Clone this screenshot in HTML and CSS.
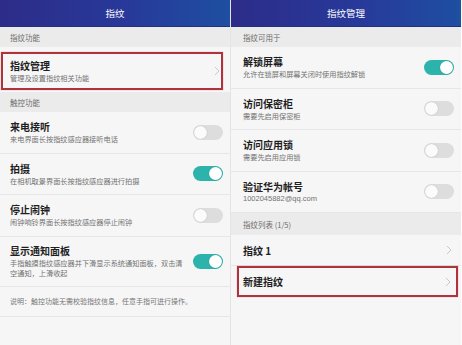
FILE: index.html
```html
<!DOCTYPE html>
<html lang="zh-CN">
<head>
  <meta charset="UTF-8" />
  <title>指纹</title>
  <link rel="stylesheet" href="styles.css">
</head>
<body>
  <div class="screens">
    <!-- 左侧：指纹 -->
    <section class="screen">
      <header class="topbar">指纹</header>
      <div class="group-title">指纹功能</div>
      <div class="row row-mark">
        <div class="mark">
          <div class="text">
            <div class="title">指纹管理</div>
            <div class="desc">管理及设置指纹相关功能</div>
          </div>
          <svg class="chevron" viewBox="0 0 6 10"><polyline points="1,1 5,5 1,9" /></svg>
        </div>
      </div>
      <div class="group-title">触控功能</div>
      <div class="row">
        <div class="text">
          <div class="title">来电接听</div>
          <div class="desc">来电界面长按指纹感应器接听电话</div>
        </div>
        <span class="switch"></span>
      </div>
      <div class="row">
        <div class="text">
          <div class="title">拍摄</div>
          <div class="desc">在相机取景界面长按指纹感应器进行拍摄</div>
        </div>
        <span class="switch on"></span>
      </div>
      <div class="row">
        <div class="text">
          <div class="title">停止闹钟</div>
          <div class="desc">闹钟响铃界面长按指纹感应器停止闹钟</div>
        </div>
        <span class="switch"></span>
      </div>
      <div class="row row-tall">
        <div class="text">
          <div class="title">显示通知面板</div>
          <div class="desc desc-wrap">手指触摸指纹感应器并下滑显示系统通知面板，双击清空通知，上滑收起</div>
        </div>
        <span class="switch on"></span>
      </div>
      <div class="note">说明：触控功能无需校验指纹信息，任意手指可进行操作。</div>
    </section>

    <!-- 右侧：指纹管理 -->
    <section class="screen screen-right">
      <header class="topbar">指纹管理</header>
      <div class="group-title">指纹可用于</div>
      <div class="row">
        <div class="text">
          <div class="title">解锁屏幕</div>
          <div class="desc">允许在锁屏和屏幕关闭时使用指纹解锁</div>
        </div>
        <span class="switch on"></span>
      </div>
      <div class="row">
        <div class="text">
          <div class="title">访问保密柜</div>
          <div class="desc">需要先启用保密柜</div>
        </div>
        <span class="switch"></span>
      </div>
      <div class="row">
        <div class="text">
          <div class="title">访问应用锁</div>
          <div class="desc">需要先启用应用锁</div>
        </div>
        <span class="switch"></span>
      </div>
      <div class="row">
        <div class="text">
          <div class="title">验证华为帐号</div>
          <div class="desc desc-mail">1002045882@qq.com</div>
        </div>
        <span class="switch"></span>
      </div>
      <div class="group-title group-list">指纹列表 (1/5)</div>
      <div class="row row-short">
        <div class="title">指纹 1</div>
        <svg class="chevron" viewBox="0 0 6 10"><polyline points="1,1 5,5 1,9" /></svg>
      </div>
      <div class="row row-short row-new">
        <div class="mark">
          <div class="title">新建指纹</div>
          <svg class="chevron" viewBox="0 0 6 10"><polyline points="1,1 5,5 1,9" /></svg>
        </div>
      </div>
    </section>
  </div>
</body>
</html>
```

FILE: styles.css
```css
* {
  box-sizing: border-box;
  margin: 0;
  padding: 0;
}

body {
  font-family: "Noto Sans CJK SC", "Noto Sans", sans-serif;
  background-color: #f6f6f6;
  width: 462px;
  height: 345px;
  overflow: hidden;
}

.screens {
  display: flex;
  gap: 1px;
  height: 345px;
  background-color: #e4e4e4;
}

.screen {
  flex: 0 0 230px;
  background-color: #f6f6f6;
}

.screen-right {
  flex: 0 0 231px;
  border-right: 1px solid #fcfcfc;
}

.topbar {
  height: 27px;
  background: linear-gradient(90deg, #2d2c88 0%, #27399a 55%, #1e4fa1 100%);
  border-bottom: 1px solid #23307a;
  color: #ffffff;
  font-size: 9.5px;
  display: flex;
  align-items: center;
  justify-content: center;
}

.group-title {
  height: 20px;
  background-color: #ebebeb;
  color: #6b6b6b;
  font-size: 7.5px;
  padding-left: 10px;
  display: flex;
  align-items: center;
}

.screen-right .group-title {
  padding-left: 12px;
}

.group-list {
  height: 22px;
}

.row {
  height: 41.5px;
  padding: 0 7px 0 10px;
  display: flex;
  align-items: center;
  justify-content: space-between;
  border-bottom: 1px solid #e6e6e6;
}

.screen-right .row {
  padding-left: 12px;
}

.row-tall {
  height: 50px;
}

.row-short {
  height: 31px;
  padding-right: 9px;
}

.title {
  font-size: 10px;
  font-weight: 700;
  color: #1e1e1e;
  line-height: 13px;
}

.desc {
  font-size: 7.2px;
  color: #727272;
  line-height: 10px;
  margin-top: 1px;
}

.desc-wrap {
  width: 175px;
}

.desc-mail {
  font-family: "Liberation Sans", "Noto Sans", sans-serif;
  font-size: 7.5px;
}

.note {
  height: 30px;
  padding-left: 10px;
  display: flex;
  align-items: center;
  font-size: 7px;
  color: #767676;
  border-bottom: 1px solid #e6e6e6;
}

/* 红框标注 */
.row-mark {
  height: 45px;
  padding: 5px 7px 2px 1px;
  border-bottom: none;
}

.mark {
  flex: 1;
  height: 100%;
  display: flex;
  align-items: center;
  justify-content: space-between;
  padding: 0 1px 1px 7px;
  border: 2px solid #b0323c;
  box-shadow: 0 0 1px rgba(176, 50, 60, 0.5);
}

.screen-right .row-new {
  padding: 0 3px 0 6px;
  border-bottom: none;
}

.row-new .mark {
  padding: 0 5px 0 4px;
}

.chevron {
  width: 6px;
  height: 10px;
  fill: none;
  stroke: #c4c4c4;
  stroke-width: 0.9;
}

/* 开关 */
.switch {
  position: relative;
  flex: 0 0 30px;
  width: 30px;
  height: 15px;
  border-radius: 8px;
  background-color: #dddddd;
}

.switch::after {
  content: "";
  position: absolute;
  top: 1px;
  left: 1px;
  width: 13px;
  height: 13px;
  border-radius: 50%;
  background-color: #fbfbfb;
  box-shadow: 0 0 1px rgba(0, 0, 0, 0.25);
}

.switch.on {
  background-color: #2bb3ac;
}

.switch.on::after {
  left: 16px;
  background-color: #ffffff;
}
```
